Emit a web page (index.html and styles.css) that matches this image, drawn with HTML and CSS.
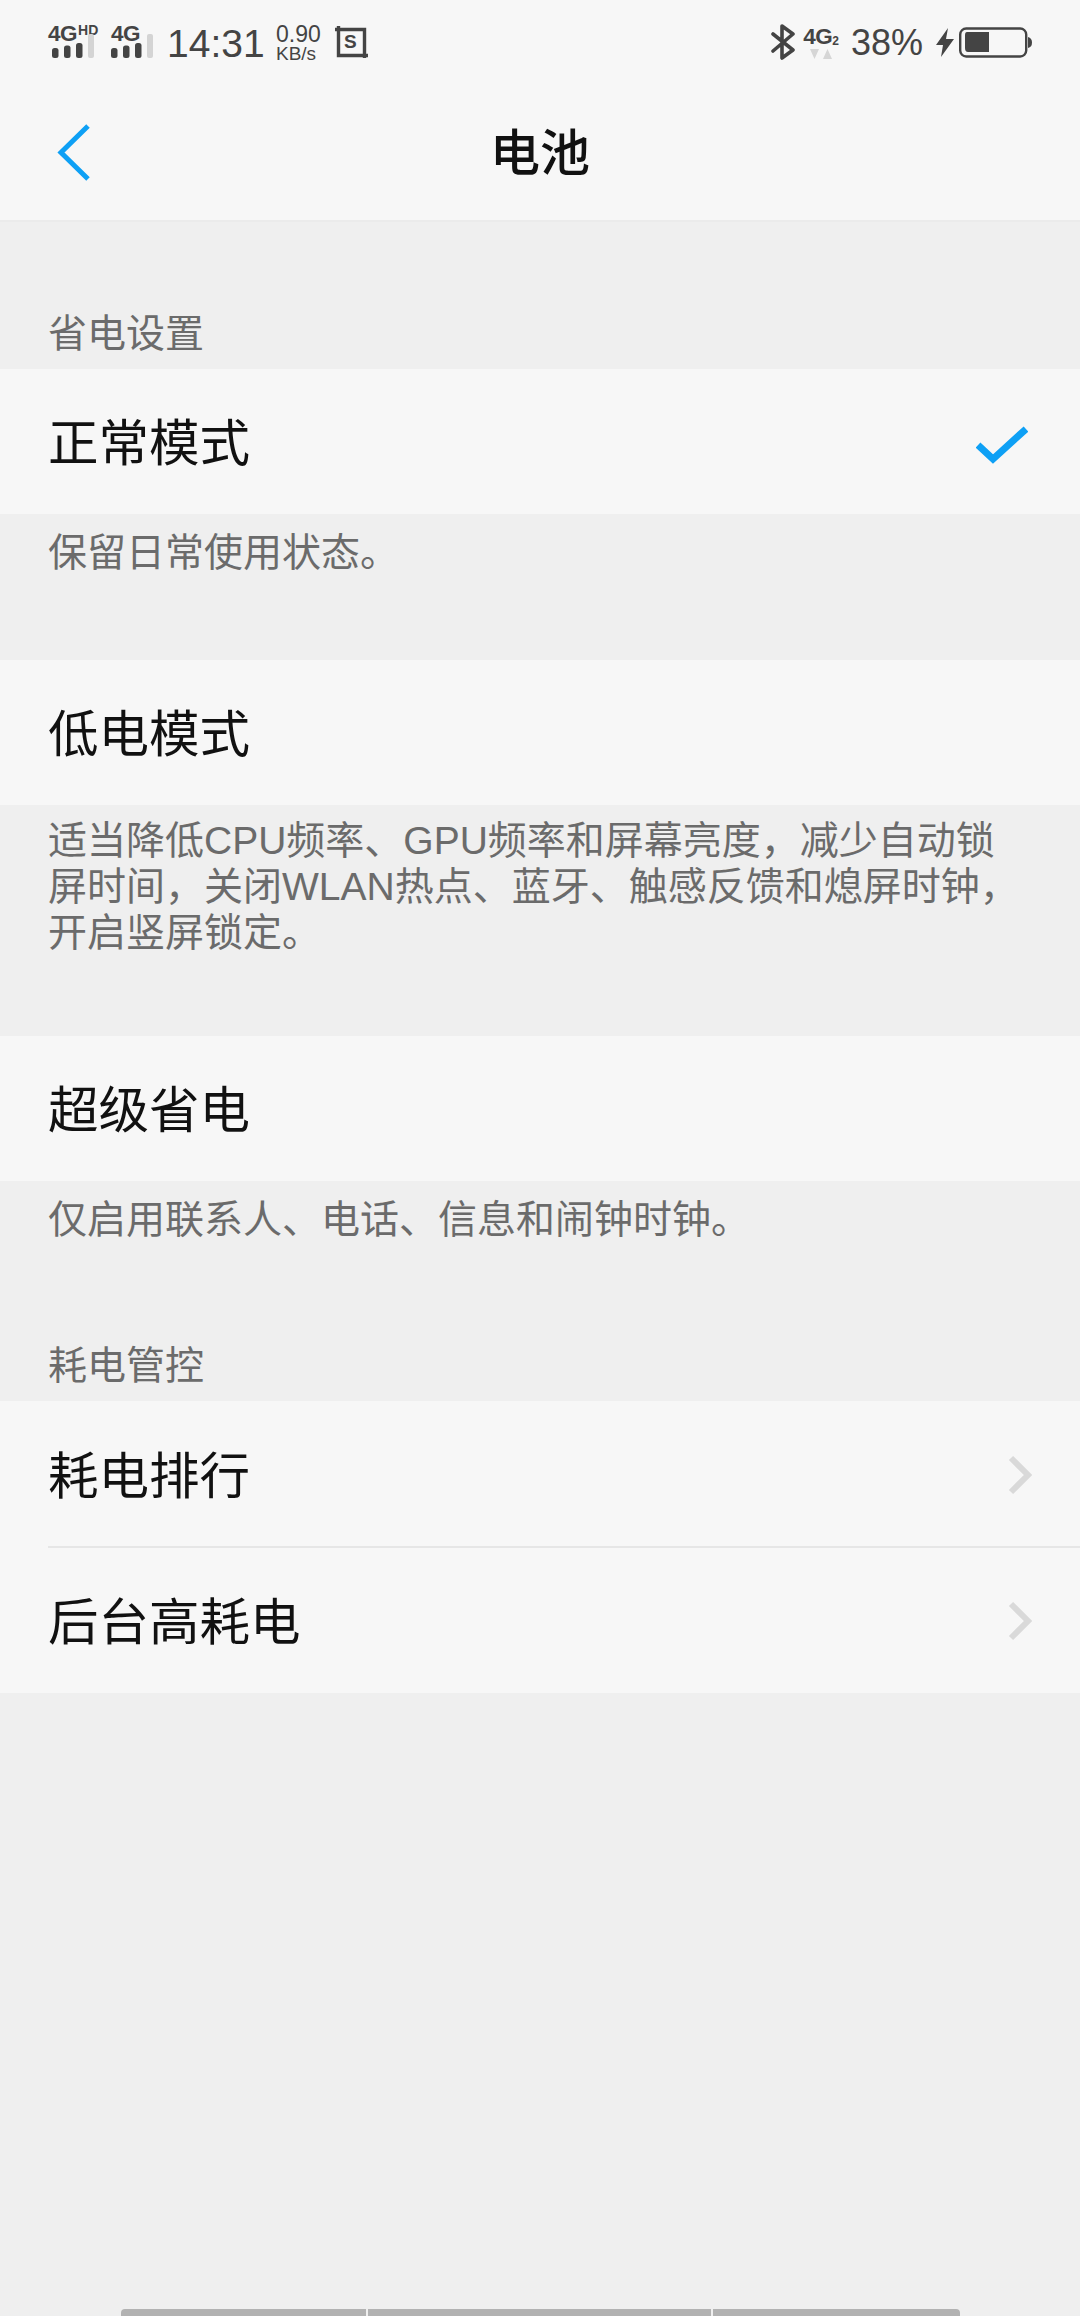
FILE: index.html
```html
<!DOCTYPE html>
<html lang="zh-CN">
<head>
<meta charset="utf-8">
<title>电池</title>
<link rel="stylesheet" href="styles.css">
</head>
<body>
<div class="page">
  <header class="top">
    <div class="status">
      <div class="status-side">
        <div class="sim">
          <div class="sim-label"><span class="net">4G</span><span class="hd">HD</span></div>
          <svg class="bars" width="42" height="16" viewBox="0 0 42 16"><rect x="4" y="6" width="6.500" height="10" rx="2.500" fill="#444"/><rect x="16" y="3.500" width="6.500" height="12.500" rx="2.500" fill="#444"/><rect x="28" y="1" width="6.500" height="15" rx="2.500" fill="#444"/></svg>
          <span class="bar-off bar-off-a"></span>
        </div>
        <div class="sim sim-b">
          <div class="sim-label"><span class="net">4G</span></div>
          <svg class="bars" width="42" height="16" viewBox="0 0 42 16"><rect x="0" y="6" width="6.500" height="10" rx="2.500" fill="#444"/><rect x="12" y="3.500" width="6.500" height="12.500" rx="2.500" fill="#444"/><rect x="24" y="1" width="6.500" height="15" rx="2.500" fill="#444"/></svg>
          <span class="bar-off bar-off-b"></span>
        </div>
        <span class="time">14:31</span>
        <div class="speed"><span class="speed-num">0.90</span><span class="speed-unit">KB/s</span></div>
        <div class="shot">
          <svg width="33" height="33" viewBox="0 0 33 33" fill="none" stroke="#444" stroke-width="3.400"><path d="M0 3.500H29.500V32M3.500 0V29.500H33"/></svg>
          <span class="shot-s">S</span>
        </div>
      </div>
      <div class="status-side">
        <svg class="bt" width="24" height="36" viewBox="0 0 24 36" fill="none" stroke="#444" stroke-width="3.600" stroke-linejoin="round" stroke-linecap="round"><path d="M2 10L22 26L11 34V2L22 10L2 27"/></svg>
        <div class="sim2">
          <div class="sim2-label"><span class="net2">4G</span><span class="sub2">2</span></div>
          <svg width="22" height="11" viewBox="0 0 22 11" fill="#d6d6d6"><path d="M0 0H9L4.500 10ZM13 10L17.500 0L22 10Z"/></svg>
        </div>
        <span class="pct">38%</span>
        <svg class="bolt" width="18" height="29" viewBox="0 0 18 29" fill="#444"><path d="M12 0L0 17H7L5 29L18 11H10Z"/></svg>
        <svg class="batt" width="73" height="32" viewBox="0 0 73 32"><rect x="1.200" y="1.500" width="66" height="28" rx="6" fill="none" stroke="#444" stroke-width="2.400"/><path d="M8 5H30V25H9Q6 25 6 21V8Q6 5 8 5Z" fill="#444"/><path d="M69 10Q73 11 73 15.500Q73 20 69 21Z" fill="#444"/></svg>
      </div>
    </div>
    <nav class="nav">
      <svg class="back" width="36" height="58" viewBox="0 0 36 58" fill="none" stroke="#0ea0f5" stroke-width="5"><path d="M34 2L7 28.500L34 55"/></svg>
      <h1 class="title">电池</h1>
    </nav>
  </header>

  <div class="group-label group-first">省电设置</div>
  <div class="row"><span class="row-text">正常模式</span>
    <svg class="check" width="52" height="38" viewBox="0 0 52 38" fill="none" stroke="#0ea0f5" stroke-width="7"><path d="M2 19L17 33L50 3"/></svg>
  </div>
  <p class="desc">保留日常使用状态。</p>
  <div class="row"><span class="row-text">低电模式</span></div>
  <p class="desc desc-long">适当降低CPU频率、GPU频率和屏幕亮度，减少自动锁屏时间，关闭WLAN热点、蓝牙、触感反馈和熄屏时钟，开启竖屏锁定。</p>
  <div class="row"><span class="row-text">超级省电</span></div>
  <p class="desc desc-last">仅启用联系人、电话、信息和闹钟时钟。</p>
  <div class="group-label">耗电管控</div>
  <div class="list">
    <div class="row row-line"><span class="row-text">耗电排行</span>
      <svg class="chev" width="24" height="40" viewBox="0 0 24 40" fill="none" stroke="#d9d9d9" stroke-width="6"><path d="M3 3L20 20L3 37"/></svg>
    </div>
    <div class="row"><span class="row-text">后台高耗电</span>
      <svg class="chev" width="24" height="40" viewBox="0 0 24 40" fill="none" stroke="#d9d9d9" stroke-width="6"><path d="M3 3L20 20L3 37"/></svg>
    </div>
  </div>
  <div class="home-bar"><span class="hb hb-a"></span><span class="hb hb-b"></span><span class="hb hb-c"></span></div>
</div>
</body>
</html>
```
FILE: styles.css
```css
* { box-sizing: border-box; }
html, body { margin: 0; padding: 0; }
body {
  width: 1080px;
  height: 2316px;
  overflow: hidden;
  background: #efefef;
  font-family: "Liberation Sans", "Noto Sans CJK SC", sans-serif;
}
.page { height: 2316px; display: flex; flex-direction: column; }
.top { height: 222px; background: #f7f7f7; border-bottom: 2px solid #ebebeb; flex: none; }
.status { height: 86px; padding: 24px 48px 0; display: flex; justify-content: space-between; align-items: flex-start; color: #444; }
.status-side { display: flex; align-items: flex-start; }
.sim { position: relative; width: 51px; height: 36px; }
.sim-b { width: 42px; margin-left: 12px; }
.sim-label { display: flex; height: 19px; line-height: 19px; }
.net { font-size: 22.500px; font-weight: 700; letter-spacing: -0.500px; }
.hd { font-size: 14px; font-weight: 700; line-height: 13px; margin-left: 1px; }
.bars { position: absolute; left: 0; bottom: 2px; }
.bar-off { position: absolute; bottom: 2px; width: 6px; height: 24px; background: #d4d4d4; border-radius: 2px; }
.bar-off-a { left: 40px; }
.bar-off-b { left: 36px; }
.time { font-size: 39px; line-height: 40px; margin-left: 14px; width: 95px; }
.speed { display: flex; flex-direction: column; margin-left: 14px; width: 46px; align-items: flex-start; }
.speed-num { font-size: 23px; line-height: 20px; }
.speed-unit { font-size: 19px; line-height: 20px; }
.shot { position: relative; width: 33px; height: 33px; margin: 2px 0 0 13px; }
.shot svg { display: block; }
.shot-s { position: absolute; left: 9px; top: 6px; font-size: 19px; line-height: 19px; font-weight: 700; }
.bt { margin-right: 8px; }
.sim2 { display: flex; flex-direction: column; align-items: center; width: 36px; margin: 2px 12px 0 0; }
.sim2-label { display: flex; align-items: flex-end; height: 21px; }
.net2 { font-size: 22.500px; line-height: 21px; font-weight: 700; letter-spacing: -0.500px; }
.sub2 { font-size: 12px; line-height: 11px; font-weight: 700; }
.sim2 svg { margin-top: 2px; }
.pct { font-size: 36px; line-height: 38px; width: 72px; }
.bolt { margin: 4px 5px 0 13px; }
.batt { margin: 3px 0 0 0; }
.nav { height: 134px; position: relative; display: flex; align-items: center; justify-content: center; padding-bottom: 8px; }
.title { margin: 0; font-size: 50px; font-weight: 500; line-height: 60px; color: #111; font-family: "Noto Sans CJK SC", sans-serif; }
.back { position: absolute; left: 54px; top: 38px; }
.group-label { height: 74px; line-height: 78px; padding-left: 48px; font-size: 39px; color: #6b6b6b; flex: none; }
.group-first { margin-top: 73px; }
.row { height: 145px; flex: none; background: #f7f7f7; display: flex; align-items: center; justify-content: space-between; padding: 0 48px; position: relative; }
.row-text { font-size: 50.500px; color: #111; margin-bottom: 6px; }
.check { margin: 6px 4px 0 0; }
.desc { margin: 0; padding: 16px 48px 0; font-size: 39px; line-height: 46px; color: #6b6b6b; height: 146px; flex: none; }
.desc-long { height: 231px; padding-top: 13px; }
.list { flex: none; }
.row-line { height: 147px; }
.row-line::after { content: ""; position: absolute; left: 48px; right: 0; bottom: 0; height: 2px; background: #e6e6e6; }
.home-bar { margin-top: auto; height: 7px; padding: 0 120px 0 121px; display: flex; gap: 2px; flex: none; }
.hb { height: 7px; background: #b2b2b2; display: block; }
.hb-a { width: 245px; border-radius: 4px 0 0 0; }
.hb-b { width: 343px; }
.hb-c { flex: 1; border-radius: 0 4px 0 0; }
```
